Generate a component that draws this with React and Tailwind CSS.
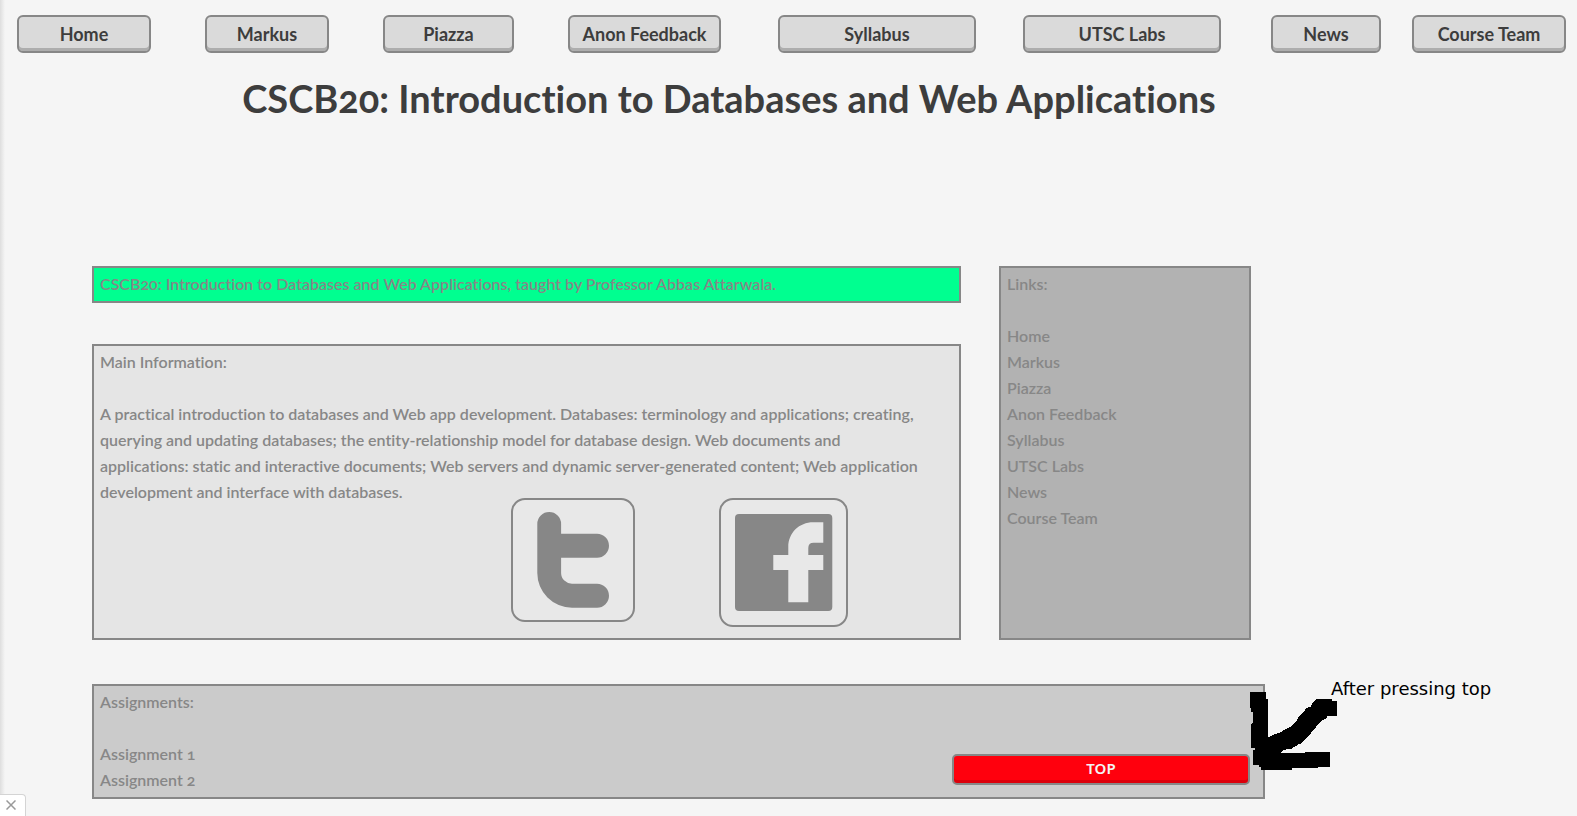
import React from "react";

const links = [
  { label: "Home", pad: "pr-[54px]" },
  { label: "Markus", pad: "pr-[54px]" },
  { label: "Piazza", pad: "pr-[54px]" },
  { label: "Anon Feedback", pad: "pr-[57px]" },
  { label: "Syllabus", pad: "pr-[47px]" },
  { label: "UTSC Labs", pad: "pr-[50px]" },
  { label: "News", pad: "pr-[31px]" },
  { label: "Course Team", pad: "pr-0" },
];

function NavBar() {
  return (
    <nav className="grid grid-cols-[188fr_178fr_185fr_210fr_245fr_248fr_141fr_154fr] pt-[15px] pr-[11px] pl-[17px]">
      {links.map(({ label, pad }) => (
        <div key={label} className={pad}>
          <button
            type="button"
            className="h-[38px] w-full rounded-md border-2 border-[#878787] bg-[#dadada] text-[18px] font-bold whitespace-nowrap text-[#3d3d3d] shadow-[inset_0_-3px_0_#adadad]"
          >
            {label}
          </button>
        </div>
      ))}
    </nav>
  );
}

function Panel({ as: Tag = "section", className = "", children }) {
  return (
    <Tag className={`border-2 border-[#878787] px-[6px] pt-[3px] pb-1 ${className}`}>
      {children}
    </Tag>
  );
}

function TwitterIcon() {
  return (
    <svg viewBox="0 0 120 120" className="size-[120px]" aria-hidden="true">
      <path
        fill="#878787"
        d="M24.3 24a11.9 11.9 0 0 1 23.8 0V33.7H84a12 12 0 0 1 0 24H48.1V73A10.8 10.8 0 0 0 59 83.7H84a12 12 0 0 1 0 24H59A34.7 34.7 0 0 1 24.3 73Z"
      />
    </svg>
  );
}

function FacebookIcon() {
  return (
    <svg viewBox="0 0 125 125" className="size-[125px]" aria-hidden="true">
      <rect x="14" y="14" width="97.3" height="97" rx="4" fill="#878787" />
      <path
        fill="#e8e8e8"
        d="M102.3 22.3V42.7H92.5Q87.3 42.7 87.3 48V55H102.3V70H87.3V102.3H67.3V70H52.3V55H67.3V47C67.3 33 78 22.3 92.3 22.3Z"
      />
    </svg>
  );
}

function Annotation() {
  return (
    <div className="absolute top-0 left-full">
      <svg
        viewBox="60 66 264 234"
        className="absolute top-2 -left-[15px] h-[78px] w-[88px]"
        shapeRendering="crispEdges"
        aria-hidden="true"
      >
        <path d="M60 66H108V87H114V203L124 197L132 194L150 188L165 178L183 170L200 152L209 136L222 126L228 116L243 109L246 99L258 87H306V93H321V138H292L288 146L274 153L250 180L238 196L230 204L215 220L205 223L185 236L165 239L152 246V249H225V246H300V291H264V294H186V299H93V290H87V285H69V240H75V234H63V165L69 157V126H63V114H60Z" />
      </svg>
      <p className="absolute -top-2 left-[66px] font-['DejaVu_Sans',sans-serif] text-[18px] leading-[26px] font-normal whitespace-nowrap text-black">
        After pressing top
      </p>
    </div>
  );
}

export default function App() {
  return (
    <div className="relative min-h-screen bg-[#f5f5f5] bg-[linear-gradient(to_right,#dedede,#f5f5f5_5px)] pb-[17px] font-['Lato','Open_Sans',sans-serif] text-[16px] leading-[26px] font-semibold text-[#878787] [font-variant-ligatures:none] [font-variant-numeric:oldstyle-nums]">
      <NavBar />
      <h1 className="mt-[19px] mr-[119px] text-center text-[38px] leading-[52px] font-bold text-[#3d3d3d]">
        CSCB20: Introduction to Databases and Web Applications
      </h1>

      <main className="mt-[142px] mr-[312px] ml-[92px]">
        <div className="mr-[14px] grid grid-cols-[869fr_252fr] gap-x-[38px]">
          <div className="flex flex-col gap-[41px]">
            <Panel className="bg-[#00ff90]">
              CSCB20: Introduction to Databases and Web Applications, taught by Professor Abbas Attarwala.
            </Panel>
            <Panel className="grow bg-[#e5e5e5]">
              <h2>Main Information:</h2>
              <p className="mt-[26px] pr-6">
                A practical introduction to databases and Web app development. Databases: terminology and applications; creating, querying and updating databases; the entity-relationship model for database design. Web documents and applications: static and interactive documents; Web servers and dynamic server-generated content; Web application development and interface with databases.
              </p>
              <div className="-mt-[7px] mb-[7px] flex items-start gap-[84px] pl-[411px]">
                <a href="#twitter" aria-label="Twitter" className="rounded-[14px] border-2 border-[#878787] bg-[#e8e8e8]">
                  <TwitterIcon />
                </a>
                <a href="#facebook" aria-label="Facebook" className="rounded-[14px] border-2 border-[#878787] bg-[#e8e8e8]">
                  <FacebookIcon />
                </a>
              </div>
            </Panel>
          </div>

          <Panel as="aside" className="bg-[#b2b2b2]">
            <h2>Links:</h2>
            <ul className="mt-[26px]">
              {links.map(({ label }) => (
                <li key={label}>
                  <a href="#top">{label}</a>
                </li>
              ))}
            </ul>
          </Panel>
        </div>

        <div className="relative mt-[44px]">
          <Panel className="flex items-end justify-between bg-[#cbcbcb]">
            <div>
              <h2>Assignments:</h2>
              <ul className="mt-[26px]">
                <li><a href="#assignment-1">Assignment 1</a></li>
                <li><a href="#assignment-2">Assignment 2</a></li>
              </ul>
            </div>
            <button
              type="button"
              className="mr-[7px] mb-2 h-[31px] w-[298px] rounded-[5px] border-2 border-[#878787] bg-[#ff000d] pb-[2px] font-['Noto_Sans',sans-serif] text-[15px] leading-none font-semibold text-[#f4f4f4] shadow-[inset_0_-3px_0_#dc000b]"
            >
              TOP
            </button>
          </Panel>
          <Annotation />
        </div>
      </main>

      <button
        type="button"
        aria-label="Close"
        className="fixed bottom-0 left-0 flex h-[22px] w-[26px] items-center justify-center rounded-tr-[4px] border-t border-r border-[#d4d4d4] bg-white pr-1 pb-[2px]"
      >
        <svg viewBox="0 0 10 10" className="size-[10px]" aria-hidden="true">
          <path d="M0.5 0.5L9.5 9.5M9.5 0.5L0.5 9.5" stroke="#999" strokeWidth="1.5" />
        </svg>
      </button>
    </div>
  );
}
